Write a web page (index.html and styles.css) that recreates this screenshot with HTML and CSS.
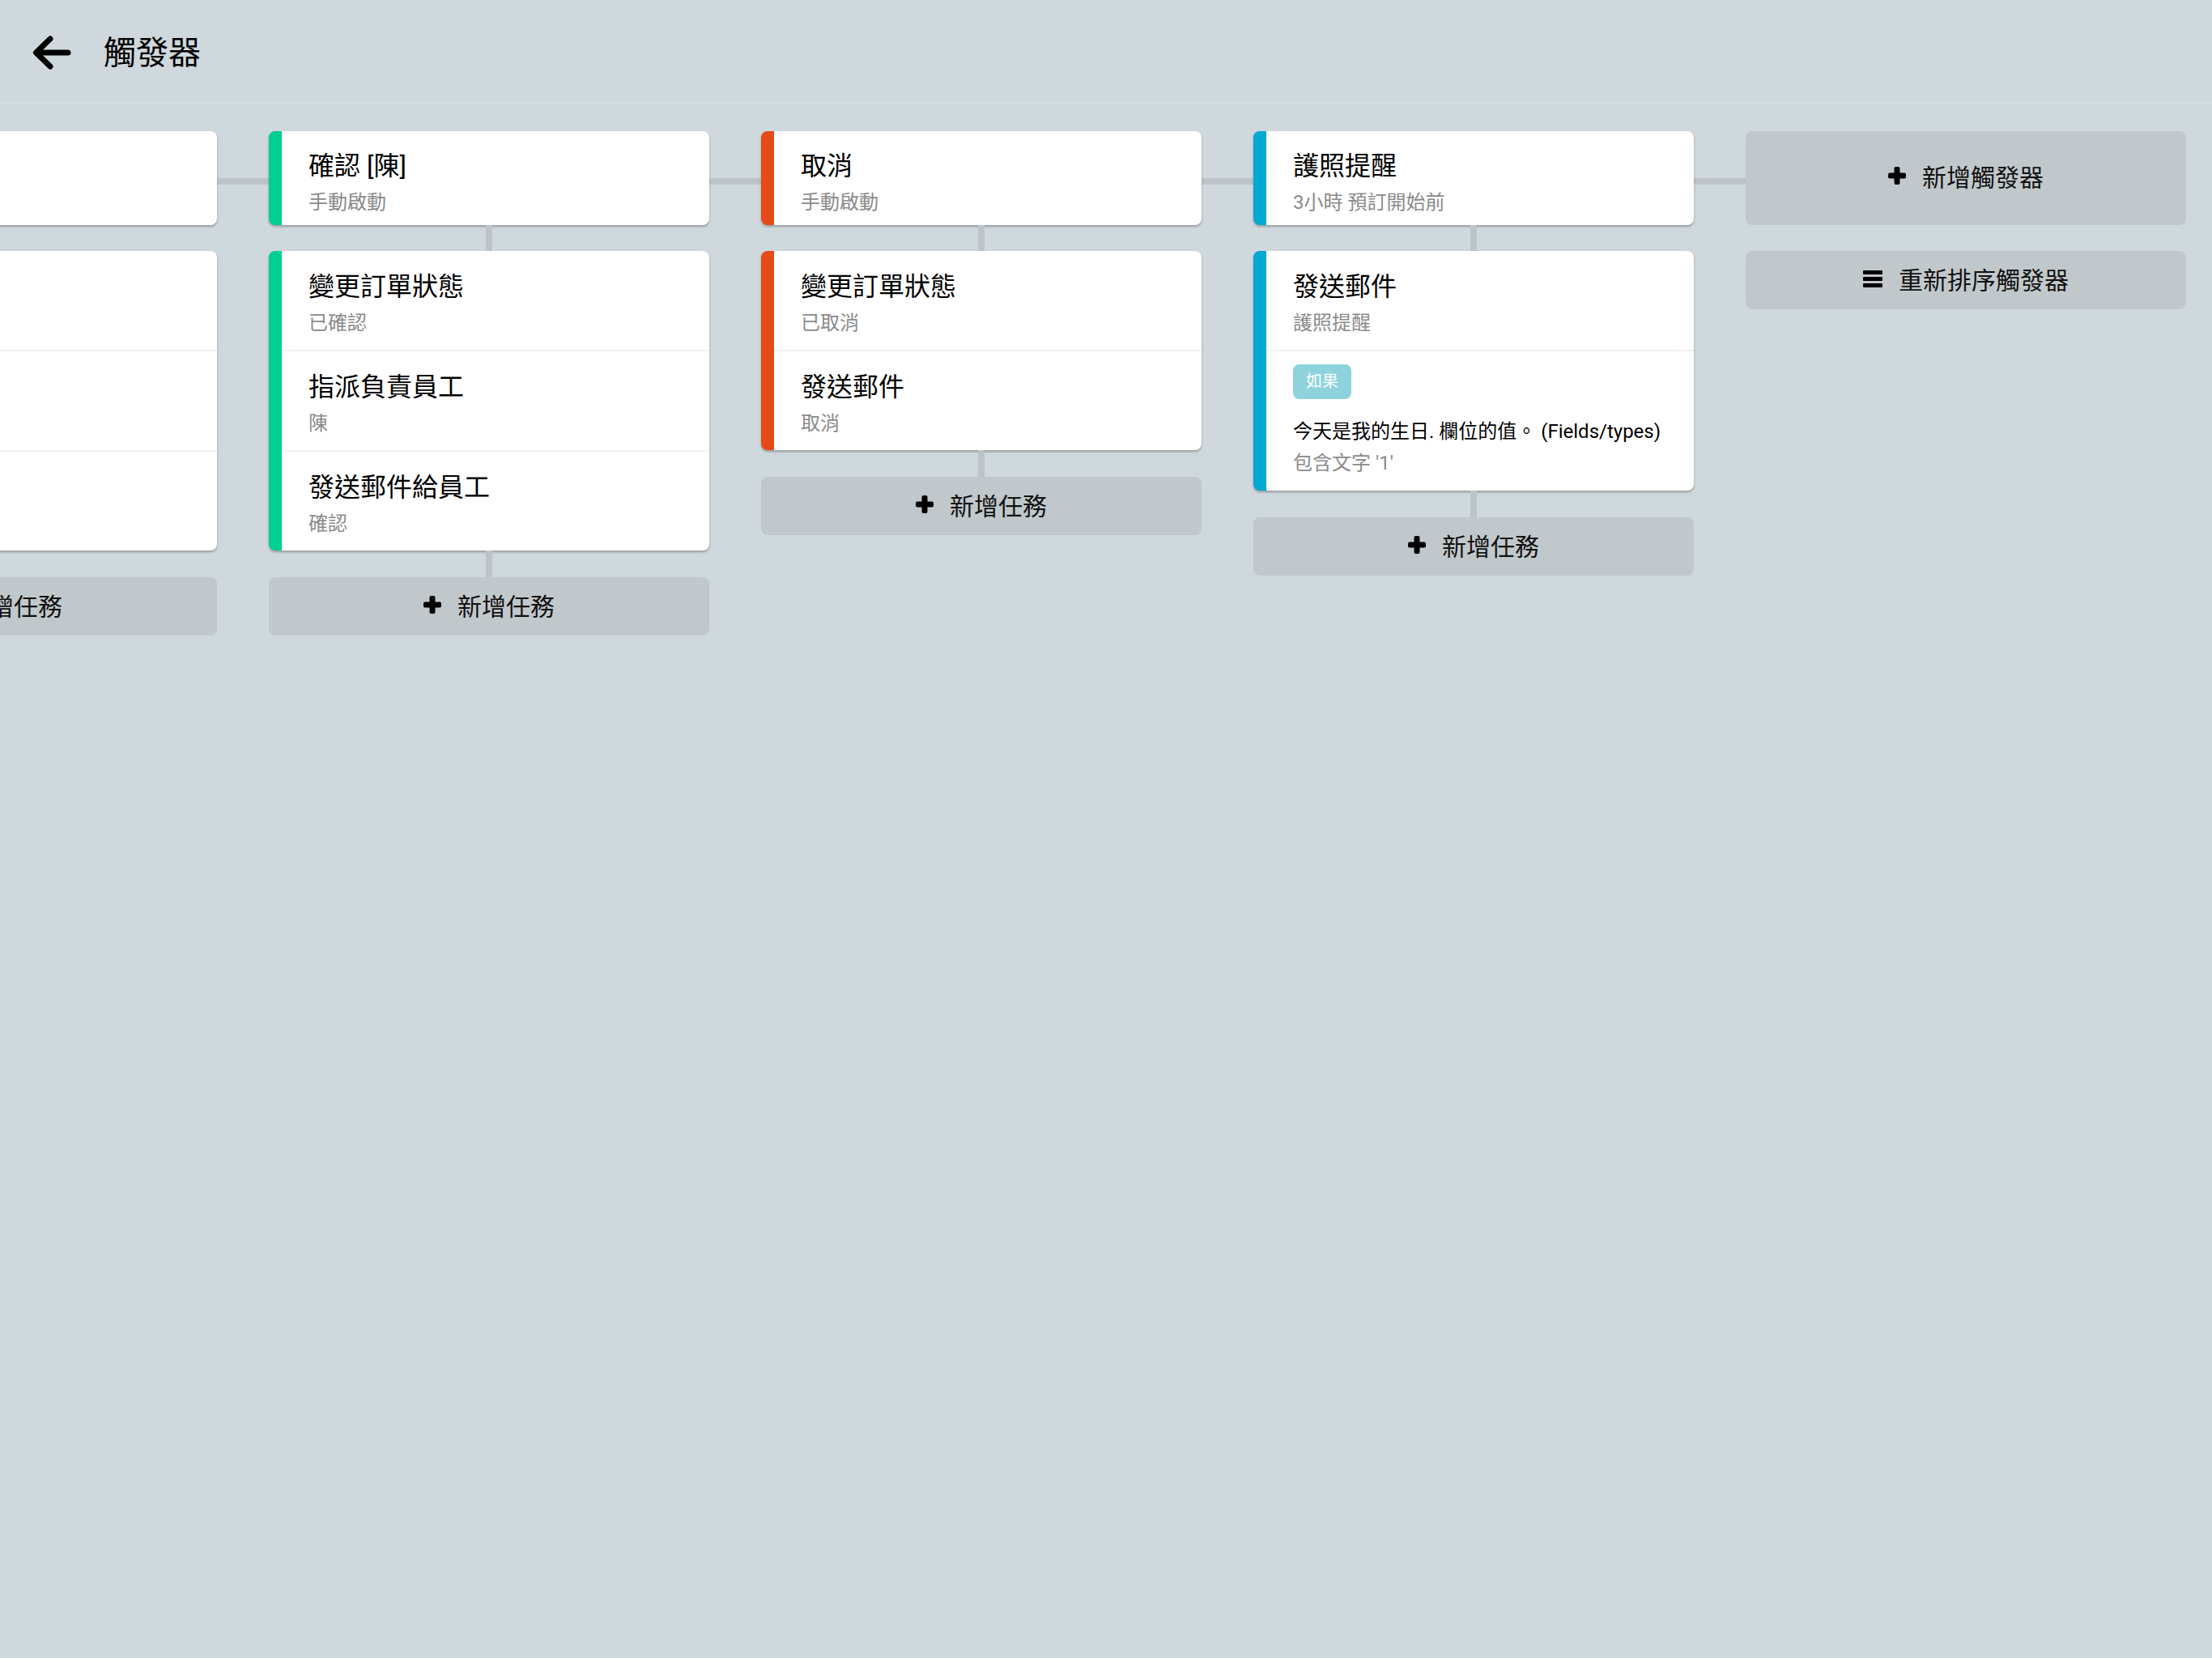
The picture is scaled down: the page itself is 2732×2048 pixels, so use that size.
FILE: index.html
```html
<!DOCTYPE html>
<html lang="zh-Hant">
<head>
<meta charset="utf-8">
<title>觸發器</title>
<link rel="stylesheet" href="styles.css">
</head>
<body>
<header class="topbar">
  <svg class="back" width="48" height="44" viewBox="0 0 48 44" aria-hidden="true">
    <path d="M44 22 H5 M22 5 L4.5 22 L22 39" fill="none" stroke="#000" stroke-width="7" stroke-linecap="round" stroke-linejoin="round"/>
  </svg>
  <h1 class="page-title">觸發器</h1>
</header>

<main class="board">
  <section class="column">
    <div class="card trigger">
      <div class="blank blank-trigger"></div>
    </div>
    <div class="link"></div>
    <div class="card">
      <div class="row"><div class="blank"></div></div>
      <div class="row"><div class="blank"></div></div>
      <div class="row"><div class="blank"></div></div>
    </div>
    <div class="link last"></div>
    <button class="add-btn"><svg class="plus" width="22" height="22" viewBox="0 0 22 22"><rect x="7.5" y="0" width="7" height="22" rx="2"/><rect x="0" y="7.5" width="22" height="7" rx="2"/></svg><span>新增任務</span></button>
  </section>

  <section class="column">
    <div class="card trigger green">
      <div class="title">確認 [陳]</div>
      <div class="sub">手動啟動</div>
    </div>
    <div class="link"></div>
    <div class="card green">
      <div class="row"><div class="title">變更訂單狀態</div><div class="sub">已確認</div></div>
      <div class="row"><div class="title">指派負責員工</div><div class="sub">陳</div></div>
      <div class="row"><div class="title">發送郵件給員工</div><div class="sub">確認</div></div>
    </div>
    <div class="link last"></div>
    <button class="add-btn"><svg class="plus" width="22" height="22" viewBox="0 0 22 22"><rect x="7.5" y="0" width="7" height="22" rx="2"/><rect x="0" y="7.5" width="22" height="7" rx="2"/></svg><span>新增任務</span></button>
  </section>

  <section class="column">
    <div class="card trigger orange">
      <div class="title">取消</div>
      <div class="sub">手動啟動</div>
    </div>
    <div class="link"></div>
    <div class="card orange">
      <div class="row"><div class="title">變更訂單狀態</div><div class="sub">已取消</div></div>
      <div class="row"><div class="title">發送郵件</div><div class="sub">取消</div></div>
    </div>
    <div class="link last"></div>
    <button class="add-btn"><svg class="plus" width="22" height="22" viewBox="0 0 22 22"><rect x="7.5" y="0" width="7" height="22" rx="2"/><rect x="0" y="7.5" width="22" height="7" rx="2"/></svg><span>新增任務</span></button>
  </section>

  <section class="column">
    <div class="card trigger blue">
      <div class="title">護照提醒</div>
      <div class="sub">3小時 預訂開始前</div>
    </div>
    <div class="link"></div>
    <div class="card blue">
      <div class="row"><div class="title">發送郵件</div><div class="sub">護照提醒</div></div>
      <div class="row cond">
        <span class="badge">如果</span>
        <div class="cond-text">今天是我的生日. 欄位的值。 (Fields/types)</div>
        <div class="cond-sub">包含文字 '1'</div>
      </div>
    </div>
    <div class="link last"></div>
    <button class="add-btn"><svg class="plus" width="22" height="22" viewBox="0 0 22 22"><rect x="7.5" y="0" width="7" height="22" rx="2"/><rect x="0" y="7.5" width="22" height="7" rx="2"/></svg><span>新增任務</span></button>
  </section>

  <section class="column actions">
    <button class="add-btn big"><svg class="plus" width="22" height="22" viewBox="0 0 22 22"><rect x="7.5" y="0" width="7" height="22" rx="2"/><rect x="0" y="7.5" width="22" height="7" rx="2"/></svg><span>新增觸發器</span></button>
    <button class="add-btn reorder"><svg class="bars" width="24" height="21" viewBox="0 0 24 21"><rect x="0" y="0" width="24" height="5" rx="1"/><rect x="0" y="8" width="24" height="5" rx="1"/><rect x="0" y="16" width="24" height="5" rx="1"/></svg><span>重新排序觸發器</span></button>
  </section>
</main>
</body>
</html>
```

FILE: styles.css
```css
html, body {
  margin: 0;
  padding: 0;
}

body {
  width: 2732px;
  height: 2048px;
  background: #cfd8dc;
  font-family: Roboto, "Noto Sans CJK TC", "Noto Sans", sans-serif;
  color: #000;
  overflow: hidden;
}

.topbar {
  height: 120px;
  padding-top: 6px;
  border-bottom: 2px solid #d7dee1;
  display: flex;
  align-items: center;
  padding-left: 40px;
  gap: 40px;
}

.back {
  display: block;
  margin-top: -3px;
}

.page-title {
  margin: 0;
  font-size: 40px;
  font-weight: 400;
  line-height: 48px;
  color: #000;
}

.board {
  position: relative;
  display: flex;
  justify-content: flex-end;
  align-items: flex-start;
  gap: 64px;
  padding: 34px 32px 0 0;
  overflow: hidden;
}

.board::before {
  content: "";
  position: absolute;
  top: 92px;
  left: 0;
  right: 576px;
  height: 8px;
  background: #bdc4c8;
}

.column {
  position: relative;
  z-index: 1;
  width: 544px;
  flex: 0 0 544px;
  display: flex;
  flex-direction: column;
}

.card {
  background: #fff;
  border-radius: 8px;
  border-left: 16px solid #fff;
  box-shadow: 0 2px 3px rgba(0, 0, 0, 0.28);
  overflow: hidden;
}

.card.green { border-left-color: #00cf92; }
.card.orange { border-left-color: #e64a19; }
.card.blue { border-left-color: #00a8d4; }

.card.trigger {
  padding: 23px 24px 12px 33px;
}

.row {
  padding: 24px 24px 17px 33px;
}

.row + .row {
  border-top: 2px solid #f2f2f2;
}

.blank {
  height: 81px;
}

.blank-trigger {
  height: 81px;
}

.title {
  font-size: 32px;
  line-height: 40px;
  color: #000;
  white-space: nowrap;
}

.sub {
  margin-top: 9px;
  font-size: 24px;
  line-height: 32px;
  color: #8a8a8a;
  white-space: nowrap;
}

.row.cond {
  padding: 16px 24px 18px 33px;
}

.badge {
  display: inline-block;
  height: 43px;
  line-height: 43px;
  padding: 0 16px;
  border-radius: 8px;
  background: #8ed3dc;
  color: #fff;
  font-size: 20px;
}

.cond-text {
  margin-top: 24px;
  font-size: 24px;
  line-height: 32px;
  color: #000;
  white-space: nowrap;
}

.cond-sub {
  margin-top: 7px;
  font-size: 24px;
  line-height: 32px;
  color: #8a8a8a;
}

.link {
  align-self: center;
  width: 8px;
  height: 32px;
  background: #bdc4c8;
}

.link.last {
  height: 33px;
}

.add-btn {
  display: flex;
  align-items: center;
  justify-content: center;
  gap: 20px;
  height: 72px;
  width: 100%;
  border: 0;
  border-radius: 8px;
  background: #c1c8cb;
  font-family: Roboto, "Noto Sans CJK TC", "Noto Sans", sans-serif;
  font-size: 30px;
  color: #111;
  padding: 0 0 4px 0;
}

.add-btn.big {
  height: 116px;
  padding-bottom: 6px;
}

.add-btn.reorder {
  margin-top: 32px;
  gap: 20px;
}

.plus, .bars {
  display: block;
  fill: #000;
}
```
